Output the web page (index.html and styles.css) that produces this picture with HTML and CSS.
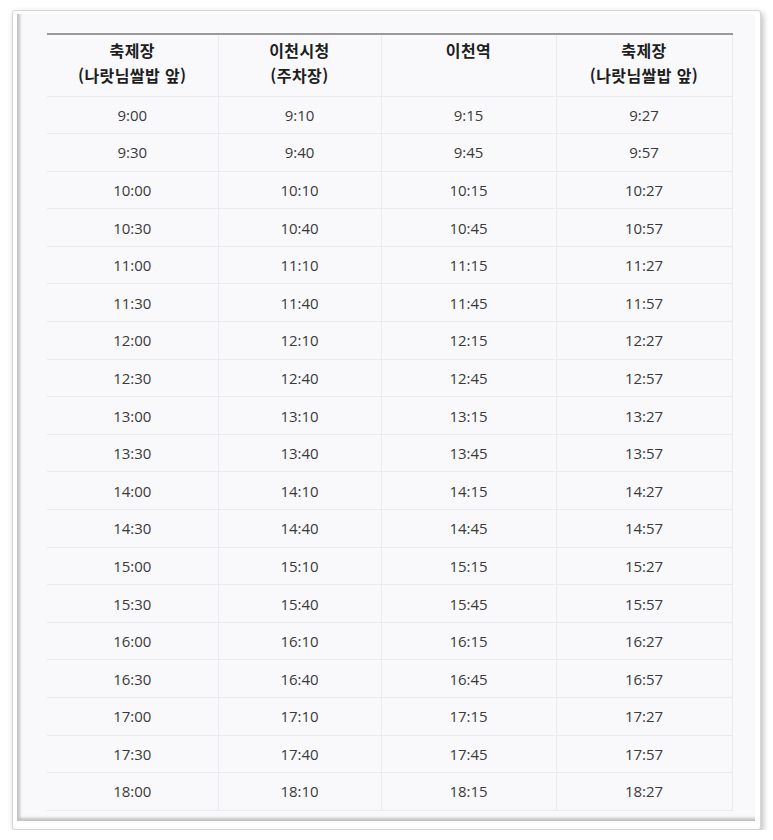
FILE: index.html
```html
<!DOCTYPE html>
<html lang="ko">
<head>
<meta charset="utf-8">
<title>셔틀버스 시간표</title>
<link rel="stylesheet" href="styles.css">
</head>
<body>
<div class="frame">
  <div class="panel">
    <table class="timetable">
      <colgroup>
        <col class="c1"><col class="c2"><col class="c3"><col class="c4">
      </colgroup>
      <thead>
        <tr>
          <th>축제장<br>(나랏님쌀밥 앞)</th>
          <th>이천시청<br>(주차장)</th>
          <th>이천역</th>
          <th>축제장<br>(나랏님쌀밥 앞)</th>
        </tr>
      </thead>
      <tbody>
        <tr><td>9:00</td><td>9:10</td><td>9:15</td><td>9:27</td></tr>
        <tr><td>9:30</td><td>9:40</td><td>9:45</td><td>9:57</td></tr>
        <tr><td>10:00</td><td>10:10</td><td>10:15</td><td>10:27</td></tr>
        <tr><td>10:30</td><td>10:40</td><td>10:45</td><td>10:57</td></tr>
        <tr><td>11:00</td><td>11:10</td><td>11:15</td><td>11:27</td></tr>
        <tr><td>11:30</td><td>11:40</td><td>11:45</td><td>11:57</td></tr>
        <tr><td>12:00</td><td>12:10</td><td>12:15</td><td>12:27</td></tr>
        <tr><td>12:30</td><td>12:40</td><td>12:45</td><td>12:57</td></tr>
        <tr><td>13:00</td><td>13:10</td><td>13:15</td><td>13:27</td></tr>
        <tr><td>13:30</td><td>13:40</td><td>13:45</td><td>13:57</td></tr>
        <tr><td>14:00</td><td>14:10</td><td>14:15</td><td>14:27</td></tr>
        <tr><td>14:30</td><td>14:40</td><td>14:45</td><td>14:57</td></tr>
        <tr><td>15:00</td><td>15:10</td><td>15:15</td><td>15:27</td></tr>
        <tr><td>15:30</td><td>15:40</td><td>15:45</td><td>15:57</td></tr>
        <tr><td>16:00</td><td>16:10</td><td>16:15</td><td>16:27</td></tr>
        <tr><td>16:30</td><td>16:40</td><td>16:45</td><td>16:57</td></tr>
        <tr><td>17:00</td><td>17:10</td><td>17:15</td><td>17:27</td></tr>
        <tr><td>17:30</td><td>17:40</td><td>17:45</td><td>17:57</td></tr>
        <tr><td>18:00</td><td>18:10</td><td>18:15</td><td>18:27</td></tr>
      </tbody>
    </table>
  </div>
</div>
</body>
</html>
```
FILE: styles.css
```css
html, body {
  margin: 0;
  padding: 0;
  background: #ffffff;
}

.frame {
  margin: 10px 0 0 12px;
  width: 749px;
  height: 820px;
  box-sizing: border-box;
  background: #ffffff;
  border: 1px solid #d6d6d6;
  border-radius: 3px;
  box-shadow: 2px 3px 6px rgba(0, 0, 0, 0.28);
  padding: 3px 5px 8px 4px;
}

.panel {
  height: 100%;
  box-sizing: border-box;
  background: #f9f9fc;
  box-shadow: inset 3px -3px 3px rgba(0, 0, 0, 0.22);
  padding: 19px 0 0 30px;
}

.timetable {
  border-collapse: collapse;
  table-layout: fixed;
  width: 685px;
  border-top: 2px solid #9a9a9a;
  font-family: "Open Sans", "Noto Sans CJK KR", sans-serif;
}

.c1 { width: 171px; }
.c2 { width: 163px; }
.c3 { width: 175px; }
.c4 { width: 176px; }

.timetable th,
.timetable td {
  border-bottom: 1px solid #ebebef;
  border-right: 1px solid #ebebef;
  text-align: center;
  padding: 0;
}

.timetable th {
  height: 62px;
  vertical-align: top;
  padding-top: 3px;
  box-sizing: border-box;
  font-family: "Noto Sans CJK KR", sans-serif;
  font-weight: 700;
  font-size: 16px;
  letter-spacing: 0.4px;
  line-height: 25px;
  color: #1e1e1e;
}

.timetable td {
  height: 36.6px;
  font-size: 15px;
  line-height: 20px;
  color: #3a3a3a;
}
```
